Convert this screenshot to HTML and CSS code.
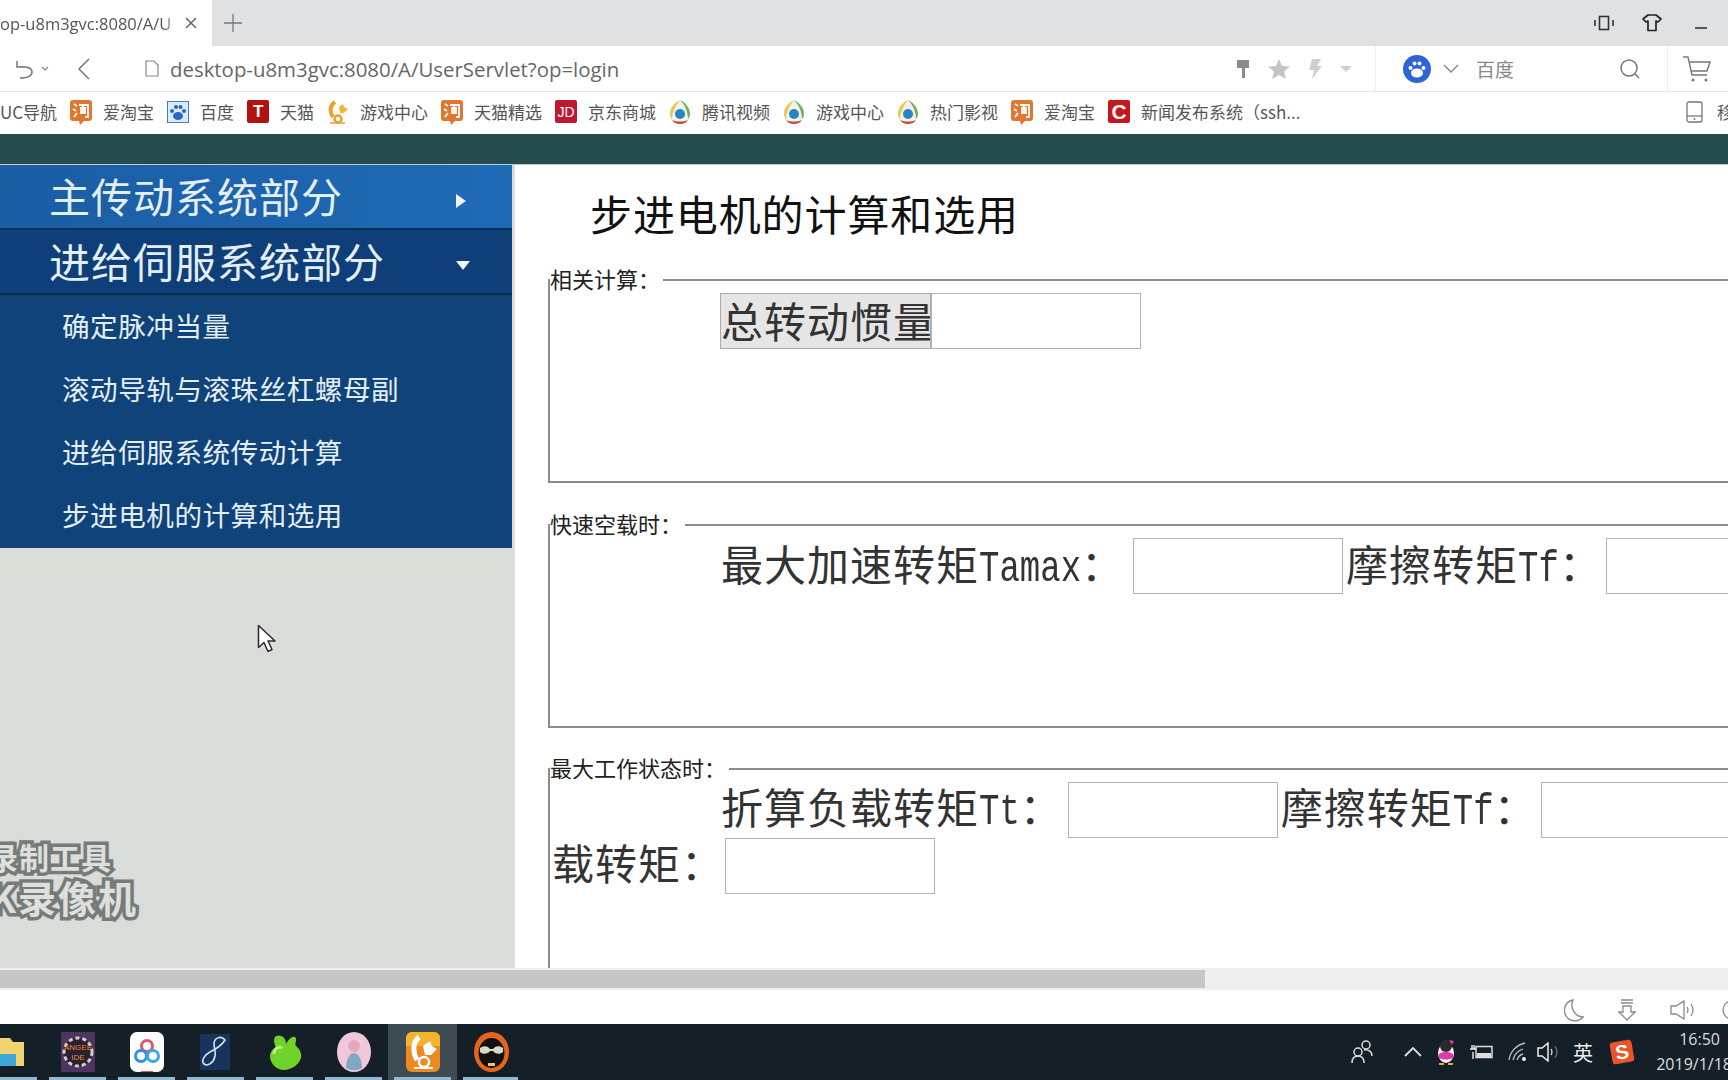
FILE: index.html
```html
<!DOCTYPE html>
<html lang="zh-CN">
<head>
  <meta charset="UTF-8" />
  <title>步进电机的计算和选用</title>
  <link rel="stylesheet" href="styles.css">
</head>
<body>
  <svg class="defs" width="0" height="0" aria-hidden="true">
    <symbol id="tao" viewBox="0 0 22 26">
      <path d="M3 1h16a3 3 0 0 1 3 3v15a3 3 0 0 1-3 3h-5l-4 4-1-4H3a3 3 0 0 1-3-3V4a3 3 0 0 1 3-3z" fill="#e2762f"/>
      <path d="M4 5l3 2M3 10l3 2M4 18l3-4M9 6h9v12h-3M11 9h4v5h-4zM13 6v8" fill="none" stroke="#fff" stroke-width="1.8"/>
    </symbol>
    <symbol id="qq-tv" viewBox="0 0 22 26">
      <path d="M11 1C5 4 1 9 1 15c0 6 5 10 10 10s10-4 10-10c0-6-4-11-10-14z" fill="#f2f2ea"/>
      <path d="M11 1C5 4 1 9 1 15c0 2 1 4 2 6 0-7 3-14 8-20z" fill="#e8c84c"/>
      <path d="M11 1c6 3 10 8 10 14 0 2-1 4-2 5 0-7-3-14-8-19z" fill="#6fb05a"/>
      <path d="M3 21c2 3 5 4 8 4s6-1 8-4c-5 2-11 2-16 0z" fill="#c9483c"/>
      <circle cx="11" cy="15" r="5" fill="#2a83c4"/>
    </symbol>
  </svg>

  <header class="tabbar">
    <div class="tab">
      <span class="tab-title">op-u8m3gvc:8080/A/U</span>
      <svg class="tab-close" width="12" height="12" viewBox="0 0 12 12"><path d="M1 1l10 10M11 1L1 11" stroke="#666" stroke-width="1.5"/></svg>
    </div>
    <svg class="tab-new" width="20" height="20" viewBox="0 0 20 20"><path d="M10 1v18M1 10h18" stroke="#777" stroke-width="1.3"/></svg>
    <div class="window-btns">
      <svg width="20" height="16" viewBox="0 0 20 16"><path d="M1 5v6M19 5v6" stroke="#333" stroke-width="1.6"/><rect x="5.5" y="1.5" width="9" height="13" fill="none" stroke="#333" stroke-width="1.6"/></svg>
      <svg width="20" height="18" viewBox="0 0 20 18"><path d="M6 1h8l5 4-3 3-2-1v9.5H6V7L4 8 1 5z" fill="none" stroke="#222" stroke-width="1.7" stroke-linejoin="round"/></svg>
      <svg class="win-min" width="12" height="4" viewBox="0 0 12 4"><path d="M0 2h12" stroke="#333" stroke-width="1.6"/></svg>
    </div>
  </header>

  <div class="addressbar">
    <svg class="nav-undo" width="22" height="22" viewBox="0 0 22 22"><path d="M3 3v6h7M3 9c7-1 15 0 15 5s-5 6-12 6" fill="none" stroke="#777" stroke-width="1.5"/></svg>
    <svg class="nav-drop" width="8" height="6" viewBox="0 0 8 6"><path d="M1 1l3 3 3-3" fill="none" stroke="#888" stroke-width="1.2"/></svg>
    <svg class="nav-back" width="14" height="24" viewBox="0 0 14 24"><path d="M12 2L2 12l10 10" fill="none" stroke="#777" stroke-width="1.5"/></svg>
    <svg class="nav-doc" width="14" height="17" viewBox="0 0 14 17"><path d="M1 1h8l4 4v11H1z" fill="none" stroke="#888" stroke-width="1.2"/></svg>
    <span class="url">desktop-u8m3gvc:8080/A/UserServlet?op=login</span>
    <div class="url-tools">
      <svg width="14" height="20" viewBox="0 0 14 20"><path d="M1 1h12v8H9v10H6V9H1z" fill="#8a8a8a"/></svg>
      <svg width="22" height="20" viewBox="0 0 22 20"><path d="M11 0l3 7 8 .6-6 5 2 7.400-7-4-7 4 2-7.400-6-5L8 7z" fill="#c4c4c4"/></svg>
      <svg width="14" height="20" viewBox="0 0 14 20"><path d="M4 0h9L9 7h5L4 20l2-9H1z" fill="#cfcfcf"/></svg>
      <svg width="12" height="6" viewBox="0 0 12 6"><path d="M0 0h12L6 6z" fill="#d0d0d0"/></svg>
    </div>
    <div class="search-box">
      <svg width="28" height="28" viewBox="0 0 28 28"><circle cx="14" cy="14" r="14" fill="#2f64d6"/><ellipse cx="14" cy="18" rx="6" ry="4.500" fill="#fff"/><circle cx="7.500" cy="13" r="2" fill="#fff"/><circle cx="11.500" cy="8.500" r="2" fill="#fff"/><circle cx="16.500" cy="8.500" r="2" fill="#fff"/><circle cx="20.500" cy="13" r="2" fill="#fff"/></svg>
      <svg class="search-drop" width="16" height="10" viewBox="0 0 16 10"><path d="M1 1l7 7 7-7" fill="none" stroke="#888" stroke-width="1.400"/></svg>
      <span class="search-name">百度</span>
      <svg class="search-go" width="22" height="22" viewBox="0 0 22 22"><circle cx="10" cy="10" r="8" fill="none" stroke="#777" stroke-width="1.500"/><path d="M16 16l4 4" stroke="#777" stroke-width="1.500"/></svg>
    </div>
    <svg class="cart" width="30" height="28" viewBox="0 0 30 28"><path d="M1 2h5l4 18h15M7 7h21l-3 9H9" fill="none" stroke="#777" stroke-width="1.400"/><circle cx="11" cy="25" r="1.500" fill="#777"/><circle cx="24" cy="25" r="1.500" fill="#777"/></svg>
  </div>

  <nav class="bookmarks">
    <a class="mark">UC导航</a>
    <a class="mark"><svg class="mark-icon" width="22" height="26"><use href="#tao"/></svg>爱淘宝</a>
    <a class="mark"><svg class="mark-icon" width="22" height="22" viewBox="0 0 22 22"><rect x=".5" y=".5" width="21" height="21" fill="#dfeaf7" stroke="#3f7fc4"/><ellipse cx="11" cy="15" rx="5" ry="4" fill="#2368c4"/><circle cx="5" cy="10" r="2" fill="#2368c4"/><circle cx="9" cy="6" r="2" fill="#2368c4"/><circle cx="13.500" cy="6" r="2" fill="#2368c4"/><circle cx="17" cy="10" r="2" fill="#2368c4"/></svg>百度</a>
    <a class="mark"><span class="mark-badge mark-tmall">T</span>天猫</a>
    <a class="mark"><svg class="mark-icon" width="22" height="24" viewBox="0 0 22 24"><path d="M8 2C2 6 3 13 6 17" fill="none" stroke="#eba22c" stroke-width="4"/><circle cx="11" cy="19" r="3.500" fill="none" stroke="#eba22c" stroke-width="2.500"/><path d="M12 7l4-3 1 3 4 2-4 4h-4z" fill="#f3b63a"/><path d="M3 23h15" stroke="#eba22c" stroke-width="1.500"/></svg>游戏中心</a>
    <a class="mark"><svg class="mark-icon" width="22" height="26"><use href="#tao"/></svg>天猫精选</a>
    <a class="mark"><span class="mark-badge mark-jd">JD</span>京东商城</a>
    <a class="mark"><svg class="mark-icon" width="22" height="26"><use href="#qq-tv"/></svg>腾讯视频</a>
    <a class="mark"><svg class="mark-icon" width="22" height="26"><use href="#qq-tv"/></svg>游戏中心</a>
    <a class="mark"><svg class="mark-icon" width="22" height="26"><use href="#qq-tv"/></svg>热门影视</a>
    <a class="mark"><svg class="mark-icon" width="22" height="26"><use href="#tao"/></svg>爱淘宝</a>
    <a class="mark"><span class="mark-badge mark-news">C</span>新闻发布系统（ssh...</a>
    <a class="mark mark-mobile"><svg class="mark-icon" width="17" height="22" viewBox="0 0 17 22"><rect x="1" y="1" width="15" height="20" rx="2" fill="none" stroke="#777" stroke-width="1.300"/><path d="M1 15h15" stroke="#777" stroke-width="1.300"/><circle cx="8.500" cy="18" r="1" fill="#777"/></svg>移动</a>
  </nav>

  <div class="topstrip"></div>

  <div class="page">
    <aside class="side">
      <div class="menu">
        <div class="menu-head menu-head-open">主传动系统部分<span class="caret-right"></span></div>
        <div class="menu-head menu-head-active">进给伺服系统部分<span class="caret-down"></span></div>
        <ul class="menu-list">
          <li>确定脉冲当量</li>
          <li>滚动导轨与滚珠丝杠螺母副</li>
          <li>进给伺服系统传动计算</li>
          <li>步进电机的计算和选用</li>
        </ul>
      </div>
      <div class="watermark">
        <span class="wm-top">录制工具</span>
        <span class="wm-bottom">KK录像机</span>
      </div>
      <svg class="pointer" width="19" height="28" viewBox="0 0 19 28"><path d="M1.500 1.500v22l5.500-5 4 9 4-2-4-8.500h7z" fill="#fff" stroke="#2a2a2a" stroke-width="1.500" stroke-linejoin="round"/></svg>
    </aside>

    <main class="content">
      <h1>步进电机的计算和选用</h1>

      <fieldset class="group">
        <legend>相关计算：</legend>
        <div class="calc-row">
          <button class="calc-btn">总转动惯量</button><input class="calc-input calc-input-joined" type="text">
        </div>
      </fieldset>

      <fieldset class="group">
        <legend>快速空载时：</legend>
        <div class="calc-row">
          <span class="calc-label">最大加速转矩<span class="latin">Tamax</span><span class="colon">：</span></span><input class="calc-input input-gap-wide" type="text">
          <span class="calc-label">摩擦转矩<span class="latin">Tf</span><span class="colon">：</span></span><input class="calc-input" type="text">
        </div>
      </fieldset>

      <fieldset class="group group-last">
        <legend>最大工作状态时：</legend>
        <div class="calc-row">
          <span class="calc-label">折算负载转矩<span class="latin">Tt</span><span class="colon">：</span></span><input class="calc-input input-gap-mid" type="text">
          <span class="calc-label">摩擦转矩<span class="latin">Tf</span><span class="colon">：</span></span><input class="calc-input" type="text">
        </div>
        <div class="calc-row calc-row-wrap">
          <span class="calc-label">载转矩<span class="colon">：</span></span><input class="calc-input input-gap-tight" type="text">
        </div>
      </fieldset>
    </main>
  </div>

  <div class="hscroll"><div class="hscroll-thumb"></div></div>

  <div class="statusbar">
    <svg width="20" height="24" viewBox="0 0 20 24"><path d="M9 2A10.500 10.500 0 1 0 19 19 A12 12 0 0 1 9 2z" fill="none" stroke="#8a8a8a" stroke-width="1.400"/></svg>
    <svg width="18" height="22" viewBox="0 0 18 22"><path d="M3 1h12M3 4h12M5 7h8v6h4l-8 8-8-8h4z" fill="none" stroke="#8a8a8a" stroke-width="1.300"/></svg>
    <svg width="26" height="20" viewBox="0 0 26 20"><path d="M1 6h5l8-5v18l-8-5H1zM17 7q2 3 0 6M21 4q4 6 0 12" fill="none" stroke="#8a8a8a" stroke-width="1.300"/></svg>
    <svg class="status-last" width="20" height="20" viewBox="0 0 20 20"><circle cx="10" cy="10" r="9" fill="none" stroke="#8a8a8a" stroke-width="1.300"/></svg>
  </div>

  <footer class="taskbar">
    <div class="task task-first">
      <svg width="24" height="36" viewBox="0 0 24 36"><path d="M0 4h10l3 4h11v24H0z" fill="#f2d46f"/><path d="M0 20h16v12H0z" fill="#3fa6dc"/></svg>
    </div>
    <div class="task">
      <svg width="34" height="40" viewBox="0 0 34 40"><rect width="34" height="40" fill="#4d3560"/><circle cx="17" cy="20" r="14" fill="#2b2130" stroke="#d8d0c8" stroke-width="3" stroke-dasharray="4 3"/><text class="task-ide" x="17" y="18">ANGEE</text><text class="task-ide" x="17" y="28">IDE</text></svg>
    </div>
    <div class="task">
      <svg width="34" height="40" viewBox="0 0 34 40"><rect width="34" height="40" rx="7" fill="#fff"/><circle cx="17" cy="14" r="5.500" fill="none" stroke="#e0566a" stroke-width="3"/><circle cx="11" cy="24" r="5.500" fill="none" stroke="#2f8fe0" stroke-width="3"/><circle cx="23" cy="24" r="5.500" fill="none" stroke="#36a8e8" stroke-width="3"/><path d="M11 40h12" stroke="#e0566a" stroke-width="2"/></svg>
    </div>
    <div class="task">
      <svg width="32" height="36" viewBox="0 0 32 36"><rect width="30" height="36" fill="#16345e"/><path d="M25 6c-4-5-11-2-11 4 0 5 2 7 1 12-1 6-7 11-11 8-3-3 0-9 6-12 6-3 12-7 15-12z" fill="none" stroke="#d8e4f2" stroke-width="1.600"/></svg>
    </div>
    <div class="task">
      <svg width="34" height="36" viewBox="0 0 34 36"><path d="M8 2c6-2 10 2 10 8 2-4 6-8 9-7 3 2-1 7 1 9 4 3 6 8 5 12-2 7-10 12-17 12S2 30 2 22c0-4 3-7 6-9-2-3-3-9 0-11z" fill="#6fd32c"/><path d="M6 20c0-6 5-8 8-6" fill="none" stroke="#b8f07a" stroke-width="3"/></svg>
    </div>
    <div class="task">
      <svg width="34" height="40" viewBox="0 0 34 40"><ellipse cx="17" cy="20" rx="17" ry="20" fill="#f0c8dc"/><circle cx="17" cy="14" r="6" fill="#e6a8b8"/><path d="M9 36c0-9 4-15 8-15s8 6 8 15c-5 3-11 3-16 0z" fill="#7fa8c4"/></svg>
    </div>
    <div class="task task-active">
      <svg width="34" height="40" viewBox="0 0 34 40"><rect width="34" height="40" rx="6" fill="#ee8a24"/><path d="M0 6a6 6 0 0 1 6-6h22a6 6 0 0 1 6 6v8H0z" fill="#f4b52a"/><path d="M13 5C6 11 7 21 11 28" fill="none" stroke="#fff" stroke-width="5"/><circle cx="18" cy="30" r="5" fill="none" stroke="#fff" stroke-width="2.500"/><path d="M17 14l7-5 2 5 5 3-6 6h-6z" fill="#fff"/><path d="M8 36h19" stroke="#fff" stroke-width="2"/></svg>
    </div>
    <div class="task">
      <svg width="35" height="40" viewBox="0 0 35 40"><ellipse cx="17.500" cy="20" rx="17.500" ry="20" fill="#e6641c"/><ellipse cx="17.500" cy="21" rx="13" ry="15" fill="#111"/><path d="M6 16c4-3 8-2 10 1h3c2-3 6-4 10-1v4c-3 3-8 2-10-1h-3c-2 3-7 4-10 1z" fill="#d8d8c8"/><path d="M14 31h7v3h-7z" fill="#e8c070"/></svg>
    </div>

    <div class="tray">
      <svg class="tray-people" width="24" height="24" viewBox="0 0 24 24"><circle cx="8" cy="12" r="4" fill="none" stroke="#ddd" stroke-width="1.500"/><path d="M2 23c0-4 2-7 6-7s6 3 6 7" fill="none" stroke="#ddd" stroke-width="1.500"/><circle cx="16" cy="5" r="4" fill="none" stroke="#ddd" stroke-width="1.500"/><path d="M14 10c5-1 8 2 8 6" fill="none" stroke="#ddd" stroke-width="1.500"/></svg>
      <svg class="tray-up" width="18" height="10" viewBox="0 0 18 10"><path d="M1 9l8-8 8 8" fill="none" stroke="#ddd" stroke-width="1.800"/></svg>
      <svg class="tray-qq" width="20" height="26" viewBox="0 0 20 26"><ellipse cx="10" cy="14" rx="8" ry="10" fill="#f8f0f4"/><circle cx="10" cy="7" r="6" fill="#2a2a2a"/><path d="M3 15c5-3 9-3 14 0v4c-5 2-9 2-14 0z" fill="#e03aa8"/><path d="M13 1l5 1-2 4z" fill="#e03aa8"/><path d="M3 25h5M12 25h5" stroke="#e8b030" stroke-width="2"/></svg>
      <svg class="tray-bat" width="24" height="16" viewBox="0 0 24 16"><rect x="7" y="2.500" width="16" height="11" fill="none" stroke="#ddd" stroke-width="1.500"/><path d="M8 9h14v4H8z" fill="#ddd"/><path d="M1 5h6M3 1v4M5 1v4M4 8v7" stroke="#eee" stroke-width="1.400"/></svg>
      <svg class="tray-wifi" width="20" height="20" viewBox="0 0 20 20"><path d="M1 18C2 10 8 3 17 1M5 18c1-5 4-9 10-11M9 18c1-3 2-5 6-6" fill="none" stroke="#bbb" stroke-width="1.300"/><circle cx="16" cy="17" r="2" fill="#eee"/></svg>
      <svg class="tray-vol" width="24" height="20" viewBox="0 0 24 20"><path d="M1 6h4l6-5v18l-6-5H1z" fill="none" stroke="#eee" stroke-width="1.500"/><path d="M14 7q2 3 0 6" fill="none" stroke="#ddd" stroke-width="1.200"/><path d="M18 4q4 6 0 12" fill="none" stroke="#777" stroke-width="1.200"/></svg>
      <span class="tray-ime">英</span>
      <span class="tray-sogou">S</span>
      <div class="clock">
        <span>16:50</span>
        <span class="clock-date">2019/1/18</span>
      </div>
    </div>
    <div class="task-lines"></div>
  </footer>
</body>
</html>
```

FILE: styles.css
```css
* {
  box-sizing: border-box;
}
html,
body {
  height: 100%;
}
body {
  margin: 0;
  width: 1728px;
  height: 1080px;
  display: flex;
  flex-direction: column;
  overflow: hidden;
  font-family: "Noto Sans CJK SC", sans-serif;
  color: #222;
  background: #fff;
}
.defs {
  display: none;
}

/* browser chrome */
.tabbar {
  height: 46px;
  flex-shrink: 0;
  background: #dfe1e3;
  display: flex;
  align-items: center;
}
.tab {
  width: 212px;
  height: 46px;
  background: #fff;
  display: flex;
  align-items: center;
  padding-right: 15px;
}
.tab-title {
  flex: 1;
  font-family: "Open Sans", sans-serif;
  font-size: 16.5px;
  color: #555;
  white-space: nowrap;
  overflow: hidden;
  -webkit-mask-image: linear-gradient(to right, #000 88%, transparent 99%);
  mask-image: linear-gradient(to right, #000 88%, transparent 99%);
}
.tab-new {
  margin-left: 11px;
}
.window-btns {
  margin-left: auto;
  display: flex;
  align-items: center;
  gap: 28px;
  padding-right: 21px;
}
.win-min {
  margin-top: 10px;
  margin-left: 5px;
}
.addressbar {
  height: 46px;
  flex-shrink: 0;
  display: flex;
  align-items: center;
  background: #fff;
  border-bottom: 1px solid #e6e6e6;
  padding-left: 14px;
}
.nav-drop {
  margin-left: 5px;
}
.nav-back {
  margin-left: 28px;
}
.nav-doc {
  margin-left: 54px;
}
.url {
  margin-left: 11px;
  font-family: "Open Sans", sans-serif;
  font-size: 20.4px;
  color: #666;
  white-space: nowrap;
}
.url-tools {
  margin-left: auto;
  width: 139px;
  display: flex;
  align-items: center;
  gap: 18px;
}
.search-box {
  width: 293px;
  height: 46px;
  display: flex;
  align-items: center;
  padding-left: 27px;
  border-left: 1px solid #eee;
  border-right: 1px solid #eee;
}
.search-drop {
  margin-left: 12px;
}
.search-name {
  margin-left: 17px;
  font-size: 19px;
  color: #888;
}
.search-go {
  margin-left: auto;
  margin-right: 26px;
}
.cart {
  margin: 0 16px 0 14px;
}
.bookmarks {
  height: 42px;
  flex-shrink: 0;
  display: flex;
  align-items: center;
  gap: 13px;
  padding-bottom: 3px;
  background: #fff;
  font-size: 17px;
  color: #555;
  white-space: nowrap;
}
.mark {
  display: flex;
  align-items: center;
  gap: 11px;
}
.mark-icon {
  flex-shrink: 0;
}
.mark-badge {
  width: 22px;
  height: 23px;
  display: flex;
  align-items: center;
  justify-content: center;
  color: #fff;
  font-family: "Liberation Sans", sans-serif;
  font-weight: 700;
  font-size: 17px;
  border-radius: 2px;
}
.mark-tmall {
  background: #b3120f;
}
.mark-jd {
  background: #bf1830;
  font-size: 14px;
  font-weight: 400;
}
.mark-news {
  background: #c8161d;
  font-size: 21px;
}
.mark-mobile {
  margin-left: auto;
  gap: 14px;
  margin-right: -23px;
}
.topstrip {
  height: 31px;
  flex-shrink: 0;
  background: #274c4d;
  border-bottom: 1px solid #b9cbd6;
}

/* page */
.page {
  height: 803px;
  flex-shrink: 0;
  display: flex;
  overflow: hidden;
}
.side {
  width: 515px;
  flex-shrink: 0;
  position: relative;
  background: #d9dcd9;
}
.menu {
  width: 512px;
  color: #e4eef6;
}
.menu-head {
  height: 65px;
  display: flex;
  align-items: center;
  justify-content: space-between;
  padding: 0 46px 3px 49px;
  font-size: 41px;
  letter-spacing: 1px;
  white-space: nowrap;
}
.menu-head-open {
  background: linear-gradient(to right, #1a5ea4, #1f6ab6);
  border-bottom: 2px solid #0c2f5c;
}
.menu-head-active {
  background: #0e3f78;
  border-bottom: 2px solid #0a2a50;
}
.caret-right {
  margin-top: 12px;
  border-left: 10px solid #f0f4f8;
  border-top: 7px solid transparent;
  border-bottom: 7px solid transparent;
}
.caret-down {
  margin-top: 10px;
  border-top: 9px solid #f0f4f8;
  border-left: 7px solid transparent;
  border-right: 7px solid transparent;
  margin-right: -4px;
}
.menu-list {
  list-style: none;
  margin: 0;
  padding: 0;
  background: #0f4379;
}
.menu-list li {
  height: 63.25px;
  display: flex;
  align-items: center;
  padding: 0 0 4px 62px;
  font-size: 27.6px;
  letter-spacing: .5px;
  white-space: nowrap;
}
.watermark {
  position: absolute;
  left: -34px;
  top: 676px;
  display: flex;
  flex-direction: column;
  align-items: flex-end;
  width: 172px;
  font-weight: 700;
  color: #dcdfdc;
  -webkit-text-stroke: 7px #757c78;
  paint-order: stroke fill;
  line-height: 1;
  white-space: nowrap;
}
.wm-top {
  font-size: 30px;
  letter-spacing: 1px;
  margin-right: 26px;
}
.wm-bottom {
  font-size: 38px;
  letter-spacing: 2px;
  margin-top: 7px;
}
.pointer {
  position: absolute;
  left: 257px;
  top: 459px;
}
.content {
  flex: 1;
  min-width: 0;
  overflow: hidden;
  background: #fff;
  padding-left: 33px;
}
h1 {
  margin: 18px 0 25px 42px;
  height: 60px;
  line-height: 60px;
  font-size: 42px;
  font-weight: 400;
  letter-spacing: .9px;
  color: #111;
  white-space: nowrap;
}
.group {
  width: 1800px;
  min-width: 1800px;
  height: 215px;
  margin: 0 0 30px;
  padding: 1px 0 0;
  border: 2px solid #8c8c8c;
}
.group + .group-last {
  margin-top: -1px;
  height: 400px;
}
.group legend {
  padding: 0 3px 4px 0;
  font-size: 22px;
  line-height: 20px;
  color: #222;
}
.calc-row {
  display: flex;
  align-items: center;
  height: 56px;
  padding-left: 171px;
  font-size: 42px;
  letter-spacing: 1px;
  color: #333;
  white-space: nowrap;
}
.calc-row-wrap {
  padding-left: 2px;
}
.calc-label {
  padding-bottom: 8px;
}
.group-last .calc-label {
  padding-bottom: 10px;
}
.latin {
  display: inline-block;
  font-family: "Liberation Mono", monospace;
  font-size: 34px;
  line-height: 1;
  letter-spacing: 0;
  transform: scaleY(1.3);
  transform-origin: 50% 80%;
}
.colon {
  font-family: "Noto Sans CJK TC", sans-serif;
}
.calc-btn {
  width: 211px;
  height: 56px;
  margin-left: -1px;
  padding: 0 0 2px;
  background: #e4e5e4;
  border: 1px solid #aaa;
  font-family: inherit;
  font-size: 42px;
  line-height: 50px;
  letter-spacing: 1px;
  color: #333;
  text-align: left;
  white-space: nowrap;
  overflow: hidden;
}
.calc-input {
  width: 210px;
  height: 56px;
  flex-shrink: 0;
  margin: 0 3px 0 4px;
  background: #fff;
  border: 1px solid #b4b4b4;
}
.calc-input-joined {
  margin-left: 0;
}
.input-gap-wide {
  margin-left: 9px;
}
.input-gap-mid {
  margin-left: 5px;
}
.input-gap-tight {
  margin-left: 1px;
}

/* bottom bars */
.hscroll {
  height: 22px;
  flex-shrink: 0;
  padding-top: 2px;
  background: #efefef;
}
.hscroll-thumb {
  width: 1205px;
  height: 18px;
  background: #c4c7c4;
}
.statusbar {
  height: 34px;
  flex-shrink: 0;
  background: #fff;
  display: flex;
  align-items: center;
  justify-content: flex-end;
  gap: 34px;
  padding-top: 6px;
  margin-right: -14px;
}
.status-last {
  margin-left: -8px;
}
.taskbar {
  height: 56px;
  flex-shrink: 0;
  position: relative;
  display: flex;
  align-items: center;
  background: #141f28;
}
.task {
  width: 69px;
  height: 56px;
  flex-shrink: 0;
  display: flex;
  align-items: center;
  justify-content: center;
}
.task-first {
  width: 43px;
  justify-content: flex-start;
}
.task-active {
  background: #3d4b53;
}
.task-ide {
  font-family: "Liberation Sans", sans-serif;
  font-size: 8px;
  fill: #e88a3c;
  text-anchor: middle;
}
.task-lines {
  position: absolute;
  left: -20px;
  width: 538px;
  bottom: 0;
  height: 3px;
  background: repeating-linear-gradient(to right, #8fb8d4 0 57px, transparent 57px 69px);
}
.tray {
  margin-left: auto;
  display: flex;
  align-items: center;
  color: #eee;
}
.tray-up {
  margin-left: 30px;
}
.tray-qq {
  margin-left: 14px;
}
.tray-bat {
  margin-left: 13px;
}
.tray-wifi {
  margin-left: 15px;
}
.tray-vol {
  margin-left: 9px;
}
.tray-ime {
  margin-left: 12px;
  font-size: 20px;
}
.tray-sogou {
  margin-left: 18px;
  width: 22px;
  height: 22px;
  background: #e8552a;
  color: #fff;
  font-family: "Liberation Sans", sans-serif;
  font-weight: 700;
  font-size: 20px;
  line-height: 22px;
  text-align: center;
  border-radius: 3px;
  transform: rotate(-10deg);
}
.clock {
  width: 71px;
  margin-left: 24px;
  display: flex;
  flex-direction: column;
  align-items: flex-end;
  font-family: "Open Sans", sans-serif;
  font-size: 16px;
  line-height: 25px;
  white-space: nowrap;
  overflow: hidden;
  color: #ddd;
}
.clock > span:first-child {
  margin-right: 8px;
}
.clock-date {
  margin-right: -4px;
}
```
